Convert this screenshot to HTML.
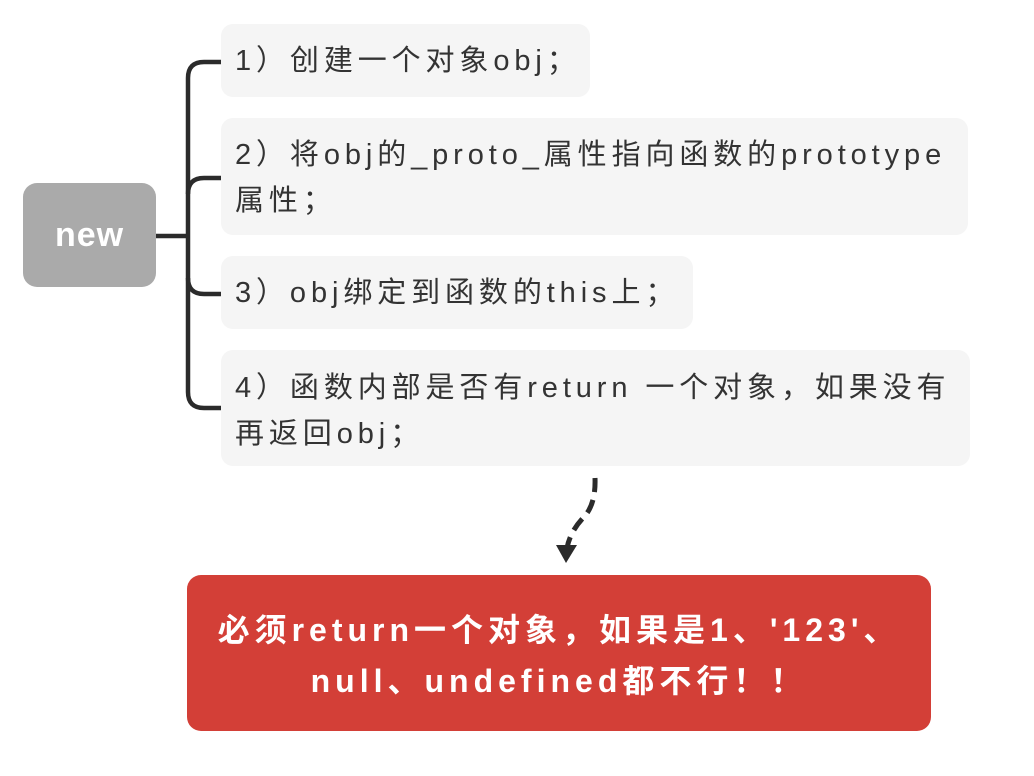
<!DOCTYPE html>
<html><head><meta charset="utf-8"><style>
body{margin:0;width:1034px;height:776px;background:#fff;position:relative;overflow:hidden;font-family:"Liberation Sans","Noto Sans CJK SC",sans-serif}
.b{position:absolute;background:#f5f5f5;border-radius:12px;color:#333;font-size:29px;letter-spacing:4.9px;line-height:46px;box-sizing:border-box;padding:0 14px;white-space:nowrap}
</style></head><body>
<div style="position:absolute;left:23px;top:183px;width:133px;height:104px;background:#aaa;border-radius:14px;color:#fff;font-size:34px;line-height:104px;text-align:center;font-weight:bold;letter-spacing:1px">new</div>
<svg width="1034" height="776" style="position:absolute;left:0;top:0">
<g fill="none" stroke="#2b2b2b" stroke-width="4.5">
<path d="M156 236H188"/>
<path d="M221 62H204Q188 62 188 78V392Q188 408 204 408H221"/>
<path d="M221 178H204Q188 178 188 194"/>
<path d="M221 294H204Q188 294 188 278"/>
<path d="M595 478Q596 505 583 518Q570 532 567 548" stroke-dasharray="14 8" stroke-width="5"/>
</g>
<path d="M556 545L577 545L566 563Z" fill="#2b2b2b"/>
</svg>
<div class="b" style="left:221px;top:24px;width:369px;height:73px;padding-top:14px">1）创建一个对象obj；</div>
<div class="b" style="left:221px;top:118px;width:747px;height:117px;padding-top:14px">2）将obj的_proto_属性指向函数的prototype<br>属性；</div>
<div class="b" style="left:221px;top:256px;width:472px;height:73px;padding-top:14px">3）obj绑定到函数的this上；</div>
<div class="b" style="left:221px;top:350px;width:749px;height:116px;padding-top:15px">4）函数内部是否有return 一个对象，如果没有<br>再返回obj；</div>
<div style="position:absolute;left:187px;top:575px;width:744px;height:156px;background:#d33f37;border-radius:14px;color:#fff;font-size:32px;letter-spacing:5px;font-weight:bold;text-align:center;line-height:51px;box-sizing:border-box;padding-top:30px">必须return一个对象，如果是1、'123'、<br>null、undefined都不行！！</div>
</body></html>
